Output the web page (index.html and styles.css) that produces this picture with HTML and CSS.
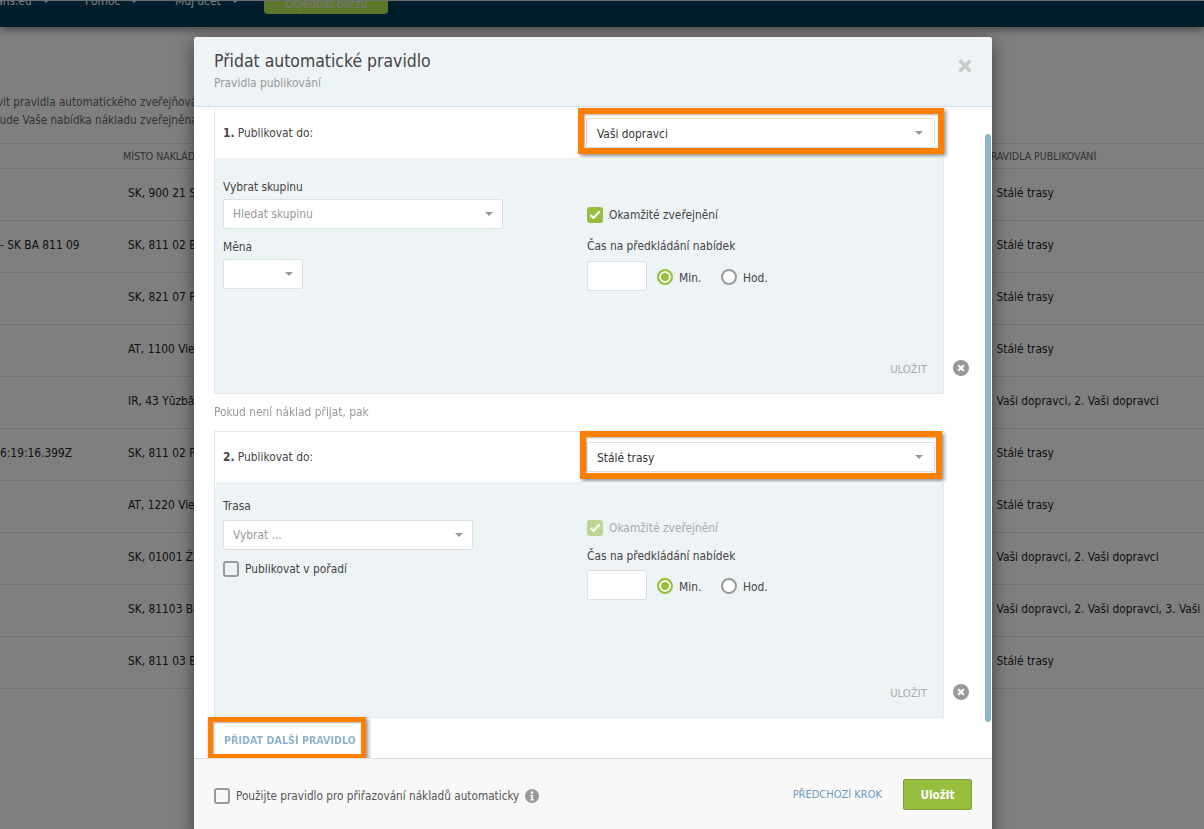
FILE: index.html
```html
<!DOCTYPE html>
<html lang="cs">
<head>
<meta charset="utf-8">
<title>Přidat automatické pravidlo</title>
<link rel="stylesheet" href="styles.css">
</head>
<body>
<div class="page">
  <nav class="topbar">
    <span class="nav-item nav-first">Trans.eu<i class="nav-caret"></i></span>
    <span class="nav-item nav-help">Pomoc<i class="nav-caret"></i></span>
    <span class="nav-item nav-account">Můj účet<i class="nav-caret"></i></span>
    <span class="nav-cta">Objednat burzu</span>
  </nav>
  <div class="intro">
    <p class="intro-a">Zde můžete nastavit pravidla automatického zveřejňování</p>
    <p class="intro-b">bude Vaše nabídka nákladu zveřejněna</p>
  </div>
  <div class="table">
    <div class="thead"><span></span><span>MÍSTO NAKLÁDKY</span><span>PRAVIDLA PUBLIKOVÁNÍ</span></div>
    <div class="row"><span></span><span>SK, 900 21 Svätý Jur</span><span>1. Stálé trasy</span></div>
    <div class="row"><span>- SK BA 811 09</span><span>SK, 811 02 Bratislava</span><span>1. Stálé trasy</span></div>
    <div class="row"><span></span><span>SK, 821 07 Pezinok</span><span>1. Stálé trasy</span></div>
    <div class="row"><span></span><span>AT, 1100 Vienna</span><span>1. Stálé trasy</span></div>
    <div class="row"><span></span><span>IR, 43 Yūzbāshī</span><span>1. Vaši dopravci, 2. Vaši dopravci</span></div>
    <div class="row"><span>6:19:16.399Z</span><span>SK, 811 02 Petržalka</span><span>1. Stálé trasy</span></div>
    <div class="row"><span></span><span>AT, 1220 Vienna</span><span>1. Stálé trasy</span></div>
    <div class="row"><span></span><span>SK, 01001 Žilina</span><span>1. Vaši dopravci, 2. Vaši dopravci</span></div>
    <div class="row"><span></span><span>SK, 81103 Bratislava</span><span>1. Vaši dopravci, 2. Vaši dopravci, 3. Vaši dopravci</span></div>
    <div class="row"><span></span><span>SK, 811 03 Bratislava</span><span>1. Stálé trasy</span></div>
  </div>
</div>
<div class="overlay"></div>
<section class="modal">
  <header class="modal-head">
    <div>
      <h1 class="modal-title">Přidat automatické pravidlo</h1>
      <p class="modal-sub">Pravidla publikování</p>
    </div>
    <svg class="modal-close" width="14" height="14" viewBox="0 0 14 14"><path d="M1.5 1.5l11 11M12.5 1.5l-11 11" stroke="#c9c9c9" stroke-width="3.4" fill="none"/></svg>
  </header>
  <div class="modal-body">
    <div class="scrollbar"></div>
    <div class="rule rule-one">
      <div class="rule-head">
        <span class="rule-name"><b>1.</b> Publikovat do:</span>
        <div class="select select-main"><span class="main-value">Vaši dopravci</span><i class="caret"></i></div>
        <div class="mark mark-one"></div>
      </div>
      <div class="rule-fields">
        <div class="col">
          <label class="lbl lbl-group">Vybrat skupinu</label>
          <div class="select select-group"><span class="ph">Hledat skupinu</span><i class="caret"></i></div>
          <label class="lbl lbl-cur">Měna</label>
          <div class="select select-cur"><i class="caret"></i></div>
        </div>
        <div class="col">
          <div class="check-line line-one">
            <span class="check on"><svg width="12" height="10" viewBox="0 0 12 10"><path d="M1.5 5l3 3 6-6.5" stroke="#fff" stroke-width="2.2" fill="none"/></svg></span>
            <span>Okamžité zveřejnění</span>
          </div>
          <label class="lbl lbl-time">Čas na předkládání nabídek</label>
          <div class="time-line">
            <div class="time-input"></div>
            <span class="radio on"></span><span class="radio-text">Min.</span>
            <span class="radio"></span><span class="radio-text">Hod.</span>
          </div>
        </div>
        <div class="rule-foot"><span class="save">ULOŽIT</span></div>
      </div>
      <svg class="rule-remove" width="16" height="16" viewBox="0 0 16 16"><circle cx="8" cy="8" r="8" fill="#999"/><path d="M5.2 5.2l5.6 5.6M10.8 5.2l-5.6 5.6" stroke="#fff" stroke-width="2.2"/></svg>
    </div>
    <p class="fallback">Pokud není náklad přijat, pak</p>
    <div class="rule rule-two">
      <div class="rule-head">
        <span class="rule-name"><b>2.</b> Publikovat do:</span>
        <div class="select select-main"><span class="main-value">Stálé trasy</span><i class="caret"></i></div>
        <div class="mark mark-two"></div>
      </div>
      <div class="rule-fields">
        <div class="col">
          <label class="lbl lbl-route">Trasa</label>
          <div class="select select-route"><span class="ph">Vybrat ...</span><i class="caret"></i></div>
          <div class="check-line line-order"><span class="check"></span><span>Publikovat v pořadí</span></div>
        </div>
        <div class="col">
          <div class="check-line line-two is-off">
            <span class="check on"><svg width="12" height="10" viewBox="0 0 12 10"><path d="M1.5 5l3 3 6-6.5" stroke="#fff" stroke-width="2.2" fill="none"/></svg></span>
            <span>Okamžité zveřejnění</span>
          </div>
          <label class="lbl lbl-time2">Čas na předkládání nabídek</label>
          <div class="time-line">
            <div class="time-input"></div>
            <span class="radio on"></span><span class="radio-text">Min.</span>
            <span class="radio"></span><span class="radio-text">Hod.</span>
          </div>
        </div>
        <div class="rule-foot"><span class="save">ULOŽIT</span></div>
      </div>
      <svg class="rule-remove" width="16" height="16" viewBox="0 0 16 16"><circle cx="8" cy="8" r="8" fill="#999"/><path d="M5.2 5.2l5.6 5.6M10.8 5.2l-5.6 5.6" stroke="#fff" stroke-width="2.2"/></svg>
    </div>
    <div class="add-line">
      <a class="add-link">PŘIDAT DALŠÍ PRAVIDLO</a>
      <div class="mark mark-add"></div>
    </div>
  </div>
  <footer class="modal-foot">
    <div class="check-line foot-check">
      <span class="check"></span>
      <span class="foot-text">Použijte pravidlo pro přiřazování nákladů automaticky</span>
      <svg class="info" width="14" height="14" viewBox="0 0 14 14"><circle cx="7" cy="7" r="7" fill="#999"/><circle cx="7" cy="3.7" r="1.4" fill="#fff"/><path d="M5.3 6h2.6v4.2h1V11.4H5.3v-1.2h1V7.2h-1z" fill="#fff"/></svg>
    </div>
    <div class="foot-actions">
      <a class="prev-link">PŘEDCHOZÍ KROK</a>
      <button class="save-btn">Uložit</button>
    </div>
  </footer>
</section>
</body>
</html>
```

FILE: styles.css
```css
* { box-sizing: border-box; }
html, body { margin: 0; height: 100%; overflow: hidden; }
body {
  font-family: "DejaVu Sans Condensed", "DejaVu Sans", sans-serif;
  font-stretch: condensed;
  font-size: 11.85px;
  color: #333;
  background: #fff;
}
p, h1 { margin: 0; }

/* background page */
.page { padding-top: 1px; height: 829px; overflow: hidden; }
.topbar {
  height: 26px;
  background: #003c5a;
  display: flex;
  overflow: hidden;
  color: #fff;
  box-shadow: 0 2px 8px rgba(0, 0, 0, .5);
  position: relative;
}
.nav-item { display: block; margin-top: -9px; line-height: 18px; white-space: nowrap; }
.nav-first { margin-left: -13px; width: 98px; }
.nav-help { width: 90px; }
.nav-account { width: 89px; }
.nav-caret {
  display: inline-block;
  margin-left: 10px;
  vertical-align: 2px;
  border: 4px solid transparent;
  border-top-color: #fff;
  border-bottom-width: 0;
}
.nav-cta {
  width: 124px;
  height: 24px;
  margin-top: -11px;
  padding-top: 7px;
  background: #b9ee54;
  border-radius: 4px;
  text-align: center;
  color: #eee;
}
.intro { margin-top: 66px; margin-bottom: 14px; font-size: 11.6px; line-height: 18px; white-space: nowrap; color: #666; }
.intro-a { margin-left: -98px; }
.intro-b { margin-left: -7px; }
.table { border-top: 1px solid #dfe5ec; }
.thead, .row { display: grid; grid-template-columns: 128px 855px 1fr; white-space: nowrap; }
.thead {
  height: 25px;
  line-height: 24px;
  font-size: 10.5px;
  color: #666;
  border-bottom: 1px solid #dfe5ec;
  grid-template-columns: 123px 862px 1fr;
}
.row { height: 52px; padding-top: 15px; border-bottom: 1px solid #dfe5ec; color: #222; line-height: 18px; }

.overlay { position: fixed; inset: 0; background: rgba(0, 0, 0, .5); }

/* modal */
.modal {
  position: absolute;
  left: 194px;
  top: 37px;
  width: 798px;
  height: 800px;
  background: #fff;
  border-radius: 3px 3px 0 0;
  box-shadow: 0 5px 18px rgba(0, 0, 0, .5);
  display: flex;
  flex-direction: column;
}
.modal-head {
  height: 70px;
  flex: none;
  padding: 13px 20px 0;
  background: #eef3f6;
  border-bottom: 1px solid #cfe0ea;
  border-radius: 3px 3px 0 0;
  display: flex;
  justify-content: space-between;
}
.modal-title { font-size: 17.45px; font-weight: 400; line-height: 22px; color: #444; }
.modal-sub { margin-top: 2px; font-size: 11.85px; line-height: 18px; color: #999; }
.modal-close { margin: 9px 0 0; }

.modal-body { position: relative; height: 651px; flex: none; padding-left: 20px; overflow: hidden; }
.scrollbar {
  position: absolute;
  right: 1px;
  top: 27px;
  width: 6px;
  height: 588px;
  background: #94b4cc;
  border-radius: 3px;
}
.rule { position: relative; width: 730px; border-left: 1px solid #e3e8ec; }
.rule-one { margin-top: 1px; }
.rule-two { border-top: 1px solid #e3e8ec; }
.rule-head { position: relative; height: 50px; display: flex; align-items: center; justify-content: space-between; padding: 0 9px 0 8px; background: #fff; }
.rule-name { color: #444; }
.rule-fields {
  position: relative;
  height: 236px;
  display: grid;
  grid-template-columns: 364px 1fr;
  padding-left: 8px;
  background: #eef3f6;
  border-right: 1px solid #e3e8ec;
  border-bottom: 1px solid #e3e8ec;
}
.lbl { display: block; line-height: 18px; color: #444; }
.lbl-group { margin-top: 20px; }
.lbl-cur { margin-top: 9px; margin-bottom: 3px; }
.lbl-route { margin-top: 15px; }
.lbl-time { margin-top: 13px; margin-bottom: 6px; }
.lbl-time2 { margin-top: 10px; margin-bottom: 5px; }

.select {
  display: flex;
  align-items: center;
  justify-content: space-between;
  height: 30px;
  background: #fff;
  border: 1px solid #dde1e4;
  border-radius: 2px;
  padding: 0 9px;
  color: #333;
}
.select .ph { color: #999; }
.select-main { width: 349px; padding: 0 11px 0 10px; }
.main-value { padding-top: 2px; }
.select-group { width: 280px; margin-top: 3px; }
.select-cur { width: 80px; justify-content: flex-end; }
.select-route { width: 250px; margin-top: 5px; }
.caret { border: 4px solid transparent; border-top-color: #999; border-bottom-width: 0; }

.check-line { display: flex; align-items: center; gap: 6px; line-height: 18px; color: #444; }
.check {
  width: 16px;
  height: 16px;
  flex: none;
  border: 2px solid #999;
  border-radius: 3px;
  display: flex;
  align-items: center;
  justify-content: center;
}
.check.on { background: #97be3f; border: 0; }
.is-off { color: #aaa; }
.is-off .check { opacity: .55; }
.line-one { margin-top: 48px; }
.line-two { margin-top: 37px; }
.line-order { margin-top: 10px; }

.time-line { display: flex; align-items: center; }
.time-input { width: 60px; height: 30px; background: #fff; border: 1px solid #dde1e4; border-radius: 2px; margin-right: 10px; }
.radio { width: 16px; height: 16px; margin-top: 2px; border: 2px solid #999; border-radius: 50%; background: #fff; }
.radio.on { border-color: #97be3f; box-shadow: inset 0 0 0 2px #fff; background: #97be3f; }
.radio-text { margin-left: 6px; margin-top: 4px; width: 42px; color: #444; }

.rule-foot { position: absolute; right: 16px; top: 203px; }
.save { font-size: 11.3px; line-height: 18px; color: #aaa; }
.rule-remove { position: absolute; left: 738px; bottom: 18px; }

.fallback { margin: 0; height: 37px; line-height: 37px; color: #999; }

.add-line { position: relative; height: 40px; padding: 14px 0 0 10px; }
.add-link { font-size: 10.7px; font-weight: 700; line-height: 18px; color: #8fb3cc; }
.mark {
  position: absolute;
  border: 6px solid #ff8000;
  box-shadow: 2px 2px 4px rgba(0, 0, 0, .45), inset 1px 1px 2px rgba(0, 0, 0, .3);
  pointer-events: none;
}
.mark-one { left: 363px; top: 0; height: 46px; width: 366px; }
.mark-two { left: 365px; top: -1px; height: 48px; width: 362px; }
.mark-add { left: -6px; top: -1px; width: 158px; height: 42px; border-width: 5px; }

.modal-foot {
  flex: none;
  height: 71px;
  padding: 20px 20px 0;
  background: #f8f8f8;
  border-top: 1px solid #ddd;
  display: flex;
  justify-content: space-between;
  align-items: flex-start;
}
.foot-check { margin-top: 8px; color: #555; }
.foot-text { font-size: 11.7px; }
.foot-actions { display: flex; align-items: center; gap: 21px; }
.prev-link { font-size: 11px; color: #6d9abb; }
.save-btn {
  width: 69px;
  height: 31px;
  background: #97be3f;
  border: 1px solid #7e9e3a;
  border-radius: 2px;
  color: #fff;
  font: inherit;
  font-stretch: condensed;
  font-size: 11.6px;
  font-weight: 700;
}
```
